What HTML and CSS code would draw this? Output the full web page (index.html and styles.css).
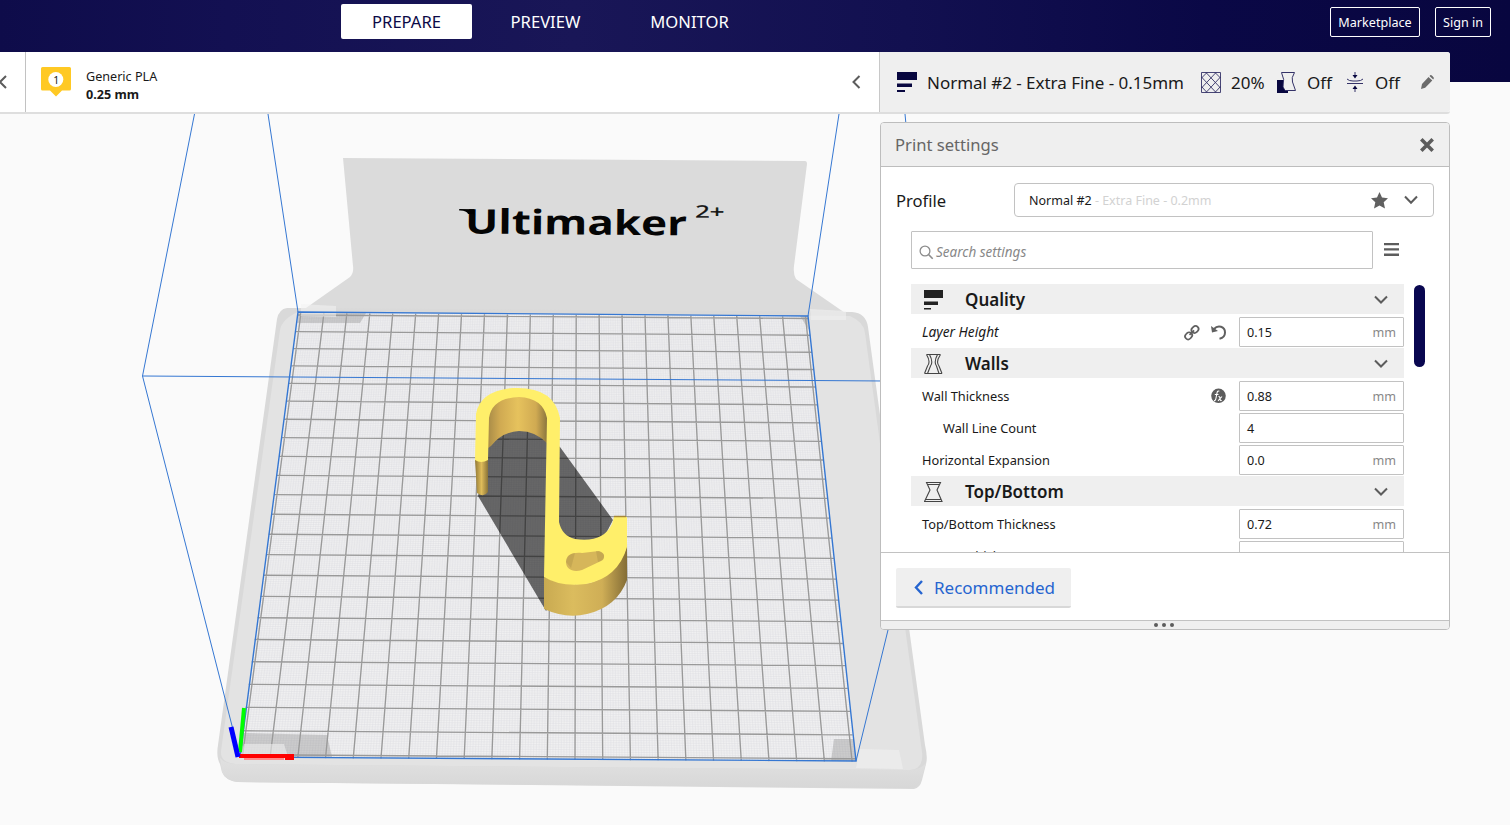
FILE: index.html
```html
<!DOCTYPE html>
<html lang="en">
<head>
<meta charset="utf-8">
<title>Ultimaker Cura</title>
<link rel="stylesheet" href="styles.css">
</head>
<body>
<svg class="scene" viewBox="0 0 1510 825" aria-hidden="true">
  <defs>
    <linearGradient id="inner" x1="0" x2="1"><stop offset="0" stop-color="#a98c48"/><stop offset=".2" stop-color="#d0aa52"/><stop offset=".5" stop-color="#e6c25d"/><stop offset=".8" stop-color="#d0aa52"/><stop offset="1" stop-color="#85713d"/></linearGradient>
    <linearGradient id="side" x1="0" x2="1"><stop offset="0" stop-color="#c9aa51"/><stop offset=".35" stop-color="#dbbc5e"/><stop offset=".7" stop-color="#cfae56"/><stop offset="1" stop-color="#846d36"/></linearGradient>
    <linearGradient id="tip" x1="0" x2="1"><stop offset="0" stop-color="#927936"/><stop offset=".5" stop-color="#dfbc5a"/><stop offset="1" stop-color="#8a7338"/></linearGradient>
    <linearGradient id="lip" x1="0" y1="0" x2="0" y2="1"><stop offset="0" stop-color="#e1e1e1"/><stop offset="1" stop-color="#d7d7d7"/></linearGradient>
  </defs>
  <path fill="#dbdbdb" d="M343 158L805 161Q807 161 807 164L794 266Q793 274 796 279L848 315H296L350 277Q354 273 353 266Z"/>
  <path fill="#d9d9d9" d="M298 308H287Q279 309 277 319L218 745Q216 757 220 764L222 772Q225 780 237 782L914 789Q920 788 922 780L926 764Q928 758 925 745L868 327Q866 313 852 312Z"/>
  <path fill="#e3e3e3" d="M298 312L850 316Q864 322 865 333L922 752Q924 769 910 770L236 764Q220 763 221 751L280 330Q282 319 298 312Z"/>
  <path fill="url(#lip)" d="M220 758Q225 764 237 764L910 770Q920 770 926 763L921 780Q918 788 909 788L237 782Q225 780 222 772Z"/>
  <path fill="#f0f0f1" d="M298 312L808 316L856 761L240 757Z"/>
  <path id="minor" class="grid-minor"/>
  <path fill="#777" fill-opacity=".3" d="M298 312L366 313L360 323L297 323ZM244 733L327 735L332 757L240 757ZM834 739L854 739L856 761L831 761ZM800 316H808L809 330Z"/>
  <path id="major" class="grid-major"/>
  <path fill="#f2f2f2" fill-opacity=".55" d="M301 304L336 306V317L301 316ZM810 309L846 311V320L811 320ZM860 749L899 750L903 769L856 768ZM244 744L284 744L288 757L240 757Z"/>
  <path class="volume" d="M194.500 114L142.500 376L240 757M268 114L298 312M839 114L808 316M905 114L930 381L888 630L856 761M142.500 376L885 381"/>
  <path class="volume bed-edge" d="M298 312L808 316L856 761L240 757Z"/>
  <path stroke="#f00" stroke-width="4" d="M239 756H285"/>
  <path stroke="#f00" stroke-width="6" d="M285 757H294"/>
  <path stroke="#ff8b8b" stroke-width="2" d="M244 759H284"/>
  <path stroke="#0f0" stroke-width="4" d="M240 752L244 708"/>
  <path stroke="#00f" stroke-width="5" d="M231 727L238 757"/>

  <path fill="#000" fill-opacity=".57" d="M484 430L520 420L560 447L613 520L600 545L546 611L478 496L485 470Z"/>
  <path fill="url(#inner)" d="M488 415Q492 396 519 396Q543 396 548 415V444Q536 431 519 431Q502 432 491 446L488 448Z"/>
  <path fill="url(#tip)" d="M475 460H488V492Q484 498 477 493Z"/>
  <path fill="url(#side)" d="M544 577Q565 587 590 583Q620 573 627 545V580Q617 607 587 614Q566 619 544 609Z"/>
  <path fill="#ffef6a" fill-rule="evenodd" d="M475 460L476 414Q480 391 513 388Q554 386 560 418L559 522Q562 536 575 539Q603 543 612 524L614 517H627L627 547Q618 578 586 584Q560 587 544 577L547 418Q543 398 519 397Q492 398 489 418L488 460Q481 464 475 460Z"/>
  <path fill="#d6b65a" d="M566 562C566 555 572 552 582 553L599 551C606 553 605 559 601 561L582 570C573 573 566 569 566 562Z"/>
  <path fill="#a68b45" fill-opacity=".35" d="M566 562Q567 554 575 553L571 568ZM596 551Q607 552 603 560L598 562Z"/>
  <path stroke="#a68735" stroke-width="1.500" d="M614 516.500H626"/>

  <g transform="rotate(.5 459 234)">
    <text class="brand" x="465" y="233.500" textLength="222" lengthAdjust="spacingAndGlyphs">Ultimaker</text>
    <path d="M459 209H474V214H468Q466 210 459 210.500Z"/>
    <text class="brand-sup" x="695" y="215.500" textLength="29" lengthAdjust="spacingAndGlyphs">2+</text>
  </g>
</svg>

<header class="topbar">
  <nav class="stages">
    <a class="stage active">PREPARE</a>
    <a class="stage preview">PREVIEW</a>
    <a class="stage monitor">MONITOR</a>
  </nav>
  <div class="account"><a class="outline market">Marketplace</a><a class="outline signin">Sign in</a></div>
</header>

<section class="stagebar">
  <div class="printer"><svg width="8" height="16" viewBox="0 0 8 16"><path class="chev" d="M6 2L0 8L6 14"/></svg></div>
  <div class="material">
    <svg width="30" height="30" viewBox="0 0 30 30"><path fill="#ffc924" d="M1.500 0H28.500Q30 0 30 1.500V22Q30 23.500 28.500 23.500H21L15 29.500L9 23.500H1.500Q0 23.500 0 22V1.500Q0 0 1.500 0Z"/><circle cx="14.800" cy="12.500" r="7.500" fill="#fff"/><text class="extruder" x="12.300" y="16.500">1</text></svg>
    <div class="material-text"><span>Generic PLA</span><b>0.25 mm</b></div>
    <svg class="collapse" width="12" height="16" viewBox="0 0 12 16"><path class="chev" d="M9.500 2L3.500 8L9.500 14"/></svg>
  </div>
  <div class="summary">
    <svg class="i-layers" width="20" height="20" viewBox="0 0 20 20"><path fill="#08073f" d="M0 0H20V8H0ZM0 11.500H15V15H0ZM0 18H8V20H0Z"/></svg>
    <span class="profile-name">Normal #2 - Extra Fine - 0.15mm</span>
    <svg class="i-infill" width="20" height="21" viewBox="0 0 20 21"><path fill="none" stroke="#343268" stroke-width=".9" d="M.5 .5H19.500V20.500H.5ZM.5 6L6 .5M.5 16L15 .5M5 20.500L19.500 5M14 20.500L19.500 14.500M.5 14.500L6 20.500M.5 5L15 20.500M5 .5L19.500 16M14 .5L19.500 6"/></svg>
    <span class="value v1">20%</span>
    <svg class="i-support" width="20" height="21" viewBox="0 0 20 21"><path fill="#08073f" d="M0 8H6V13L8 18H11V21H0Z"/><path fill="#efefef" stroke="#343268" d="M4.500 .5H17.500Q14 6 15.500 10L18.500 18.500H8L6 15Q8 7 4.500 .5Z"/><path fill="#08073f" d="M0 8H5L5.500 15L8 19H11V21H0Z"/></svg>
    <span class="value v2">Off</span>
    <svg class="i-adhesion" width="16" height="20" viewBox="0 0 16 20"><path stroke="#343268" fill="none" d="M0 11.500H16M0 7Q2 9 6 9H10Q14 9 16 7M8 0V5M8 15V20"/><path fill="#08073f" d="M5.500 3H10.500L8 6.500ZM8 13.500L10.500 17H5.500Z"/></svg>
    <span class="value v3">Off</span>
    <svg class="i-pencil" width="13" height="14" viewBox="0 0 13 14"><path fill="#6b6b6b" d="M7.500 2L11.300 5.500L4.200 12.700L0 14L1 9ZM8.500 1L9.500 0Q11-.3 13 3L12.200 4.500Z"/></svg>
  </div>
</section>

<section class="panel">
  <header class="panel-head"><span>Print settings</span><svg width="14" height="14" viewBox="0 0 14 14"><path stroke="#5c5c5c" stroke-width="3.600" d="M1.300 1.300L12.700 12.700M12.700 1.300L1.300 12.700"/></svg></header>
  <div class="panel-body">
    <div class="profile">
      <span class="profile-label">Profile</span>
      <div class="select"><span>Normal #2 <i>- Extra Fine - 0.2mm</i></span>
        <svg class="star" width="17" height="17" viewBox="0 0 17 17"><path fill="#606060" d="M8.500 0L11 5.500L17 6.200L12.700 10.300L14 16.500L8.500 13.400L3 16.500L4.300 10.300L0 6.200L6 5.500Z"/></svg>
        <svg width="16" height="10" viewBox="0 0 16 10"><path class="chev" d="M2 1.500L8 7.800L14 1.500"/></svg></div>
    </div>
    <div class="search-row">
      <div class="search"><svg width="15" height="15" viewBox="0 0 15 15"><circle cx="6" cy="6" r="4.900" fill="none" stroke="#8c8c8c" stroke-width="1.300"/><path stroke="#8c8c8c" stroke-width="1.600" d="M9.500 9.500L13.700 13.700"/></svg><span>Search settings</span></div>
      <svg class="burger" width="15" height="14" viewBox="0 0 15 14"><path fill="#5c5c5c" d="M0 0H15V2.300H0ZM0 5.300H15V7.600H0ZM0 10.600H15V12.900H0Z"/></svg>
    </div>
    <div class="list-area">
      <div class="list">
        <div class="category"><svg width="20" height="20" viewBox="0 0 20 20"><path fill="#222" d="M0 0H19V8H0ZM0 11.500H14V15H0ZM0 18H7V19.500H0Z"/></svg><b>Quality</b><svg class="fold" width="14" height="10" viewBox="0 0 14 10"><path class="chev" d="M1 1.500L7 7.500L13 1.500"/></svg></div>
        <div class="setting"><em>Layer Height</em>
          <svg class="link" width="14" height="15" viewBox="0 0 14 15"><g fill="none" stroke="#606060" stroke-width="1.700" transform="rotate(45 7 7.500)"><rect x="4" y="-.5" width="6" height="7.500" rx="3"/><rect x="4" y="8.500" width="6" height="7.500" rx="3"/><path d="M7 4.500V11"/></g></svg>
          <svg class="state" width="15" height="15" viewBox="0 0 15 15"><path fill="none" stroke="#606060" stroke-width="2" d="M3 4C7-.5 14 1.500 14 7.500C14 10.500 12 13 8.500 13.800"/><path fill="#606060" d="M0 1L1 7.500L7 6Z"/></svg>
          <div class="field">0.15<span>mm</span></div></div>
        <div class="category"><svg width="20" height="20" viewBox="0 0 20 20"><path class="outline-icon" d="M2.500 .5H16.500M.5 19.500H18M2.500 .5Q7 8 3.500 12L.5 19.500M5.500 .5Q9.500 8 6.500 12L3.500 19.500M16.500 .5Q11.500 8 15 12L18 19.500M13.500 .5Q9.500 8 12.500 12L15 19.500"/></svg><b>Walls</b><svg class="fold" width="14" height="10" viewBox="0 0 14 10"><path class="chev" d="M1 1.500L7 7.500L13 1.500"/></svg></div>
        <div class="setting"><span>Wall Thickness</span>
          <svg class="state fx" width="15" height="16" viewBox="0 0 15 16"><circle cx="7.500" cy="7.800" r="7.300" fill="#5c5c5c"/><path fill="none" stroke="#fff" stroke-width="1.100" d="M3 12.500Q4.500 13 5 10L6 5Q6.500 2.500 8.300 3.200M3.800 6.500H7.500M7.500 8.500Q9 8 9.300 12Q9.500 13 10.700 12.300M11 8.500L7 12.800"/></svg>
          <div class="field">0.88<span>mm</span></div></div>
        <div class="setting nested"><span>Wall Line Count</span><div class="field">4</div></div>
        <div class="setting"><span>Horizontal Expansion</span><div class="field">0.0<span>mm</span></div></div>
        <div class="category"><svg width="20" height="20" viewBox="0 0 20 20"><path class="outline-icon" d="M2.500 .5H16.500L13 8L18 19.500H.5L6 8ZM3.500 2.500H15.500M1.500 17.500H17"/></svg><b>Top/Bottom</b><svg class="fold" width="14" height="10" viewBox="0 0 14 10"><path class="chev" d="M1 1.500L7 7.500L13 1.500"/></svg></div>
        <div class="setting"><span>Top/Bottom Thickness</span><div class="field">0.72<span>mm</span></div></div>
        <div class="setting nested"><span>Top Thickness</span><div class="field"></div></div>
      </div>
      <div class="scrollbar"></div>
    </div>
  </div>
  <footer class="panel-foot"><a class="recommended"><svg width="9" height="15" viewBox="0 0 9 15"><path fill="none" stroke="#2665d0" stroke-width="2.400" d="M8 1L2 7.500L8 14"/></svg><span>Recommended</span></a></footer>
  <div class="grip"><i></i><i></i><i></i></div>
</section>
<script src="scene.js"></script>
</body>
</html>
```
FILE: styles.css
```css
* { box-sizing: border-box; }
body { margin: 0; width: 1510px; height: 825px; overflow: hidden; position: relative; background: #fafafa; font: 13px/18px "Noto Sans", "Open Sans", sans-serif; color: #191919; }
svg { display: block; flex: none; }
.scene { position: absolute; left: 0; top: 0; width: 1510px; height: 825px; }
.grid-minor { fill: none; stroke: #dcdce0; stroke-width: .4; }
.grid-major { fill: none; stroke: #999; stroke-width: 1.35; }
.volume { fill: none; stroke: #3577d2; stroke-width: 1; }
.bed-edge { stroke-width: 1.4; }
.brand { font: 700 34px "Open Sans", "Noto Sans", sans-serif; fill: #050505; }
.brand-sup { font: 17px "Open Sans", "Noto Sans", sans-serif; fill: #111; stroke: #111; stroke-width: .4; }
.chev { fill: none; stroke: #5c5c5c; stroke-width: 2; }

.topbar { position: relative; height: 82px; display: flex; justify-content: space-between; align-items: flex-start; padding: 4px 19px 0 341px; background: linear-gradient(90deg, #0e0c4a 0%, #131052 15%, #191657 38%, #121050 60%, #0a0846 80%, #08063f 100%); color: #fff; }
.stages { display: flex; font-size: 16.6px; }
.stage { height: 35px; line-height: 36px; text-align: center; width: 131px; border-radius: 2px; }
.stage.active { background: #fff; color: #0b0947; }
.stage.preview { margin-left: 8px; }
.stage.monitor { margin-left: 13px; }
.account { display: flex; gap: 15px; padding-top: 3px; }
.outline { height: 30px; line-height: 30px; border: 1px solid #fff; border-radius: 2px; text-align: center; font-size: 12.6px; }
.market { width: 90px; }
.signin { width: 56px; }

.stagebar { position: relative; margin-top: -30px; width: 1450px; height: 61px; display: flex; background: #fff; border-bottom: 2px solid #dedede; border-radius: 0 3px 3px 0; height: 62px; }
.printer { width: 26px; border-right: 1px solid #c2c2c2; padding-top: 22px; }
.material { width: 854px; display: flex; align-items: flex-start; padding: 15px 17px 0 15px; border-right: 1px solid #c8c8c8; }
.extruder { font: 10.5px "Noto Sans", sans-serif; fill: #222; }
.material-text { display: flex; flex-direction: column; margin: 1px 0 0 15px; font-size: 12.6px; }
.collapse { margin: 7px 0 0 auto; }
.summary { flex: 1; display: flex; align-items: center; background: #efefef; padding-left: 17px; font-size: 17px; border-radius: 0 3px 3px 0; }
.profile-name { width: 257px; margin: 2px 0 0 10px; white-space: nowrap; letter-spacing: -.03px; }
.i-infill { margin-left: 17px; }
.value { margin-top: 2px; white-space: nowrap; }
.v1 { width: 35px; margin-left: 10px; }
.i-support { margin-left: 11px; }
.v2 { width: 26px; margin-left: 10px; }
.i-adhesion { margin-left: 14px; }
.v3 { width: 26px; margin-left: 12px; }
.i-pencil { margin-left: 20px; margin-top: -1px; }

.panel { position: relative; width: 570px; height: 508px; margin: 8px 0 0 880px; display: flex; flex-direction: column; background: #fff; border: 1px solid #bdbdbd; border-radius: 4px; overflow: hidden; }
.panel-head { height: 44px; flex: none; display: flex; justify-content: space-between; align-items: center; padding: 0 15px 0 14px; background: #efefef; border-bottom: 1px solid #bdbdbd; font-size: 16.6px; color: #666; }
.panel-body { height: 386px; flex: none; padding: 16px 15px 0; overflow: hidden; border-bottom: 1px solid #c2c2c2; }
.profile { display: flex; justify-content: space-between; align-items: center; }
.profile-label { font-size: 16.6px; padding-top: 2px; }
.select { width: 420px; height: 34px; display: flex; align-items: center; padding: 0 14px; border: 1px solid #c2c2c2; border-radius: 4px; font-size: 12.5px; }
.select > span { padding-top: 1px; }
.select i { font-style: normal; color: #d2d2d2; }
.star { margin: 0 15px 0 auto; }
.search-row { display: flex; margin: 14px 0 0 15px; }
.search { width: 462px; height: 38px; display: flex; align-items: center; gap: 2px; border: 1px solid #c2c2c2; border-radius: 1px; padding: 4px 0 0 7px; color: #888; font-style: italic; font-size: 13.5px; }
.burger { margin: 12px 0 0 11px; }
.list-area { display: flex; margin: 15px 0 0 15px; align-items: flex-start; }
.list { width: 493px; }
.category { height: 30px; margin-bottom: 2px; display: flex; align-items: center; padding: 1px 16px 0 13px; background: #efefef; font-size: 17px; }
.category b { margin-left: 21px; font-weight: 600; }
.fold { margin-left: auto; }
.outline-icon { fill: none; stroke: #444; stroke-width: 1.1; }
.setting { height: 32px; display: flex; align-items: center; padding-left: 11px; font-size: 12.8px; }
.setting em { font-size: 13.7px; }
.setting.nested { padding-left: 32px; }
.field { width: 165px; height: 30px; margin-left: auto; display: flex; align-items: center; justify-content: space-between; padding: 1px 7px 0; border: 1px solid #c2c2c2; border-radius: 1px; font-size: 12.6px; }
.field span { color: #888; }
.link { margin-left: auto; overflow: visible; }
.state { margin-left: 12px; margin-right: 13px; }
.state + .field { margin-left: 0; }
.fx { margin-left: auto; }
.scrollbar { width: 11px; height: 82px; margin: 1px 0 0 10px; border-radius: 6px; background: #090750; }
.panel-foot { height: 67px; flex: none; padding: 15px; }
.recommended { width: 175px; height: 40px; display: flex; align-items: center; gap: 11px; padding-left: 18px; background: #efefef; border-bottom: 2px solid #d8d8d8; border-radius: 2px; color: #2665d0; font-size: 17px; }
.recommended span { padding-top: 2px; }
.grip { flex: 1; display: flex; justify-content: center; align-items: center; gap: 4px; padding-right: 2px; background: #efefef; border-top: 1px solid #c2c2c2; }
.grip i { width: 4px; height: 4px; border-radius: 50%; background: #5c5c5c; }
```
FILE: scene.js
```js
// Perspective projection of the unit square onto the build plate.
var tl = [300.7, 315], tr = [805.7, 318.5], br = [851.8, 758.7], bl = [242.7, 754.7];
var dx1 = tr[0] - br[0], dx2 = bl[0] - br[0], sx = tl[0] - tr[0] + br[0] - bl[0];
var dy1 = tr[1] - br[1], dy2 = bl[1] - br[1], sy = tl[1] - tr[1] + br[1] - bl[1];
var det = dx1 * dy2 - dx2 * dy1;
var g = (sx * dy2 - dx2 * sy) / det;
var h = (dx1 * sy - sx * dy1) / det;

function project(u, v) {
  var w = g * u + h * v + 1;
  var x = ((tr[0] - tl[0] + g * tr[0]) * u + (bl[0] - tl[0] + h * bl[0]) * v + tl[0]) / w;
  var y = ((tr[1] - tl[1] + g * tr[1]) * u + (bl[1] - tl[1] + h * bl[1]) * v + tl[1]) / w;
  return x.toFixed(2) + " " + y.toFixed(2);
}

function grid(divisions) {
  var d = "";
  var over = 0.0055;
  for (var i = 0; i <= divisions; i++) {
    var t = i / divisions;
    d += "M" + project(t, -over) + "L" + project(t, 1 + over);
    d += "M" + project(-over, t) + "L" + project(1 + over, t);
  }
  return d;
}

document.getElementById("minor").setAttribute("d", grid(220));
document.getElementById("major").setAttribute("d", grid(22));
```
